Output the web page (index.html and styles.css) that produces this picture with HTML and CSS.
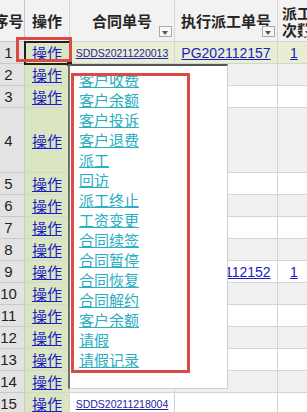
FILE: index.html
```html
<!DOCTYPE html>
<html lang="zh-CN">
<head>
    <meta charset="UTF-8">
    <meta name="viewport" content="width=device-width, initial-scale=1.0">
    <title>合同列表</title>
    <link rel="stylesheet" href="styles.css">
</head>
<body>
<div class="screen">
    <div class="sheet">
        <div class="row head">
            <div class="cell num">序号</div>
            <div class="cell op">操作</div>
            <div class="cell no">合同单号<span class="filter"></span></div>
            <div class="cell pg">执行派工单号<span class="filter"></span></div>
            <div class="cell cnt">派工次数<span class="filter"></span></div>
        </div>
        <div class="row sel">
            <div class="cell num">1</div>
            <div class="cell op active"><a href="#">操作</a></div>
            <div class="cell no"><a href="#">SDDS20211220013</a></div>
            <div class="cell pg"><a href="#">PG202112157</a></div>
            <div class="cell cnt"><a href="#">1</a></div>
        </div>
        <div class="row alt">
            <div class="cell num">2</div>
            <div class="cell op"><a href="#">操作</a></div>
            <div class="cell no"></div><div class="cell pg"></div><div class="cell cnt"></div>
        </div>
        <div class="row">
            <div class="cell num">3</div>
            <div class="cell op"><a href="#">操作</a></div>
            <div class="cell no"></div><div class="cell pg"></div><div class="cell cnt"></div>
        </div>
        <div class="row alt tall">
            <div class="cell num">4</div>
            <div class="cell op"><a href="#">操作</a></div>
            <div class="cell no"></div><div class="cell pg"></div><div class="cell cnt"></div>
        </div>
        <div class="row">
            <div class="cell num">5</div>
            <div class="cell op"><a href="#">操作</a></div>
            <div class="cell no"></div><div class="cell pg"></div><div class="cell cnt"></div>
        </div>
        <div class="row alt">
            <div class="cell num">6</div>
            <div class="cell op"><a href="#">操作</a></div>
            <div class="cell no"></div><div class="cell pg"></div><div class="cell cnt"></div>
        </div>
        <div class="row">
            <div class="cell num">7</div>
            <div class="cell op"><a href="#">操作</a></div>
            <div class="cell no"></div><div class="cell pg"></div><div class="cell cnt"></div>
        </div>
        <div class="row alt">
            <div class="cell num">8</div>
            <div class="cell op"><a href="#">操作</a></div>
            <div class="cell no"></div><div class="cell pg"></div><div class="cell cnt"></div>
        </div>
        <div class="row">
            <div class="cell num">9</div>
            <div class="cell op"><a href="#">操作</a></div>
            <div class="cell no"></div>
            <div class="cell pg"><a href="#">PG202112152</a></div>
            <div class="cell cnt"><a href="#">1</a></div>
        </div>
        <div class="row alt">
            <div class="cell num">10</div>
            <div class="cell op"><a href="#">操作</a></div>
            <div class="cell no"></div><div class="cell pg"></div><div class="cell cnt"></div>
        </div>
        <div class="row">
            <div class="cell num">11</div>
            <div class="cell op"><a href="#">操作</a></div>
            <div class="cell no"></div><div class="cell pg"></div><div class="cell cnt"></div>
        </div>
        <div class="row alt">
            <div class="cell num">12</div>
            <div class="cell op"><a href="#">操作</a></div>
            <div class="cell no"></div><div class="cell pg"></div><div class="cell cnt"></div>
        </div>
        <div class="row">
            <div class="cell num">13</div>
            <div class="cell op"><a href="#">操作</a></div>
            <div class="cell no"></div><div class="cell pg"></div><div class="cell cnt"></div>
        </div>
        <div class="row alt">
            <div class="cell num">14</div>
            <div class="cell op"><a href="#">操作</a></div>
            <div class="cell no"></div><div class="cell pg"></div><div class="cell cnt"></div>
        </div>
        <div class="row">
            <div class="cell num">15</div>
            <div class="cell op"><a href="#">操作</a></div>
            <div class="cell no"><a href="#">SDDS20211218004</a></div>
            <div class="cell pg"></div><div class="cell cnt"></div>
        </div>
    </div>

    <!-- 操作 下拉菜单 -->
    <div class="popup">
        <a href="#">客户收费</a>
        <a href="#">客户余额</a>
        <a href="#">客户投诉</a>
        <a href="#">客户退费</a>
        <a href="#">派工</a>
        <a href="#">回访</a>
        <a href="#">派工终止</a>
        <a href="#">工资变更</a>
        <a href="#">合同续签</a>
        <a href="#">合同暂停</a>
        <a href="#">合同恢复</a>
        <a href="#">合同解约</a>
        <a href="#">客户余额</a>
        <a href="#">请假</a>
        <a href="#">请假记录</a>
    </div>

    <div class="mark mark-cell"></div>
    <div class="mark mark-menu"></div>
</div>
</body>
</html>
```

FILE: styles.css
```css
body{
    margin: 0;
    font-family: "Noto Sans CJK SC", "Liberation Sans", sans-serif;
    color: #222;
}

.screen{
    position: relative;
    width: 307px;
    height: 412px;
    overflow: hidden;
    background-color: #fff;
}

.sheet{
    margin-left: -7px;
}

.row{
    display: grid;
    grid-template-columns: 32px 45px 105px 103px 40px;
    height: 22px;
}

.row.tall{
    height: 65px;
}

.row.head{
    height: 42px;
    background-color: #f2f2f2;
}

.cell{
    position: relative;
    display: flex;
    align-items: center;
    justify-content: center;
    box-sizing: border-box;
    border-right: 1px solid #d4d4d4;
    border-bottom: 1px solid #d4d4d4;
    white-space: nowrap;
    font-size: 15px;
}

.cell a{
    color: #1c1cc4;
    text-decoration: underline;
}

/* cabeçalho */
.head .cell{
    font-weight: bold;
    line-height: 17px;
    color: #262626;
}

.head .cnt{
    white-space: normal;
    justify-content: flex-start;
    padding-left: 4px;
}

.filter{
    position: absolute;
    right: 2px;
    bottom: 4px;
    width: 13px;
    height: 11px;
    box-sizing: border-box;
    border: 1px solid #a9a9a9;
    background-color: #f7f7f7;
}

.filter::after{
    content: "";
    position: absolute;
    left: 2px;
    top: 4px;
    border-top: 4px solid #555;
    border-left: 3.5px solid transparent;
    border-right: 3.5px solid transparent;
}

/* colunas */
.num{
    background-color: #e3e3e3;
    border-color: #c9c9c9;
    font-family: "Liberation Sans", sans-serif;
    font-size: 15px;
}

.head .num{
    font-family: "Noto Sans CJK SC", sans-serif;
    background-color: #f2f2f2;
}

.op{
    background-color: #dae5c1;
}

.head .op{
    background-color: #f2f2f2;
}

.no a{
    font-family: "Liberation Sans", sans-serif;
    font-size: 10.5px;
    color: #24249e;
}

.pg a{
    font-family: "Liberation Sans", sans-serif;
    font-size: 14px;
}

.cnt{
    justify-content: flex-start;
    padding-left: 12px;
}

.cnt a{
    font-family: "Liberation Sans", sans-serif;
    font-size: 14px;
}

.row.alt .no, .row.alt .pg, .row.alt .cnt{
    background-color: #f0f0f0;
}

.row.sel .no, .row.sel .pg, .row.sel .cnt{
    background-color: #e8eed2;
}

.active{
    outline: 2px solid #1f1f1f;
    outline-offset: -1px;
    z-index: 1;
}

.active::after{
    content: "";
    position: absolute;
    right: -3px;
    bottom: -3px;
    width: 5px;
    height: 5px;
    background-color: #1f1f1f;
}

/* menu */
.popup{
    position: absolute;
    left: 68px;
    top: 64px;
    width: 160px;
    height: 325px;
    box-sizing: border-box;
    padding: 4px 0 0 9px;
    background-color: #fff;
    border-left: 2px solid #6e6e6e;
    border-top: 2px solid #555;
    border-right: 1px solid #d0d0d0;
    border-bottom: 1px solid #d0d0d0;
    display: flex;
    flex-direction: column;
    align-items: flex-start;
    z-index: 2;
}

.popup a{
    font-size: 15px;
    line-height: 20px;
    color: #2aaec0;
    text-decoration: underline;
}

/* marcações vermelhas */
.mark{
    position: absolute;
    box-sizing: border-box;
    border: 3px solid #dc4a44;
    z-index: 3;
}

.mark-cell{
    left: 16px;
    top: 37px;
    width: 56px;
    height: 25px;
}

.mark-menu{
    left: 71px;
    top: 73px;
    width: 119px;
    height: 300px;
}
```
